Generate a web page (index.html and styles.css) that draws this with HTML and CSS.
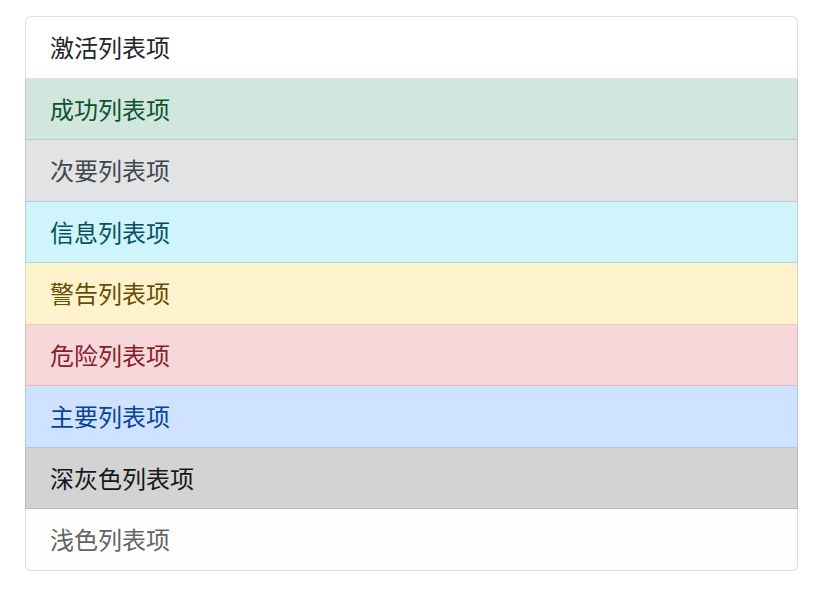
FILE: index.html
```html
<!DOCTYPE html>
<html lang="zh">
<head>
<meta charset="utf-8">
<link rel="stylesheet" href="styles.css">
</head>
<body>
<ul class="list-group">
  <li class="item">激活列表项</li>
  <li class="item item-success">成功列表项</li>
  <li class="item item-secondary">次要列表项</li>
  <li class="item item-info">信息列表项</li>
  <li class="item item-warning">警告列表项</li>
  <li class="item item-danger">危险列表项</li>
  <li class="item item-primary">主要列表项</li>
  <li class="item item-dark">深灰色列表项</li>
  <li class="item item-light">浅色列表项</li>
</ul>
</body>
</html>
```
FILE: styles.css
```css
html, body {
  margin: 0;
  padding: 0;
  background: #fff;
}
body {
  padding: 16px 31px 0 25px;
  font-family: "Noto Sans CJK SC", "Liberation Sans", sans-serif;
  font-size: 24px;
  color: #212529;
}
.list-group {
  list-style: none;
  margin: 0;
  padding: 0;
  display: flex;
  flex-direction: column;
  border-radius: 6px;
}
.item {
  line-height: 36px;
  padding: 12.25px 24px;
  background: #fff;
  border: 1px solid rgba(0, 0, 0, 0.125);
}
.item + .item {
  border-top-width: 0;
}
.item:first-child {
  border-top-left-radius: 6px;
  border-top-right-radius: 6px;
}
.item:last-child {
  border-bottom-left-radius: 6px;
  border-bottom-right-radius: 6px;
}
.item-primary { color: #084298; background: #cfe2ff; }
.item-secondary { color: #41464b; background: #e2e3e5; }
.item-success { color: #0f5132; background: #d1e7dd; }
.item-info { color: #055160; background: #cff4fc; }
.item-warning { color: #664d03; background: #fff3cd; }
.item-danger { color: #842029; background: #f8d7da; }
.item-light { color: #636464; background: #fefefe; }
.item-dark { color: #141619; background: #d3d3d4; }
```
